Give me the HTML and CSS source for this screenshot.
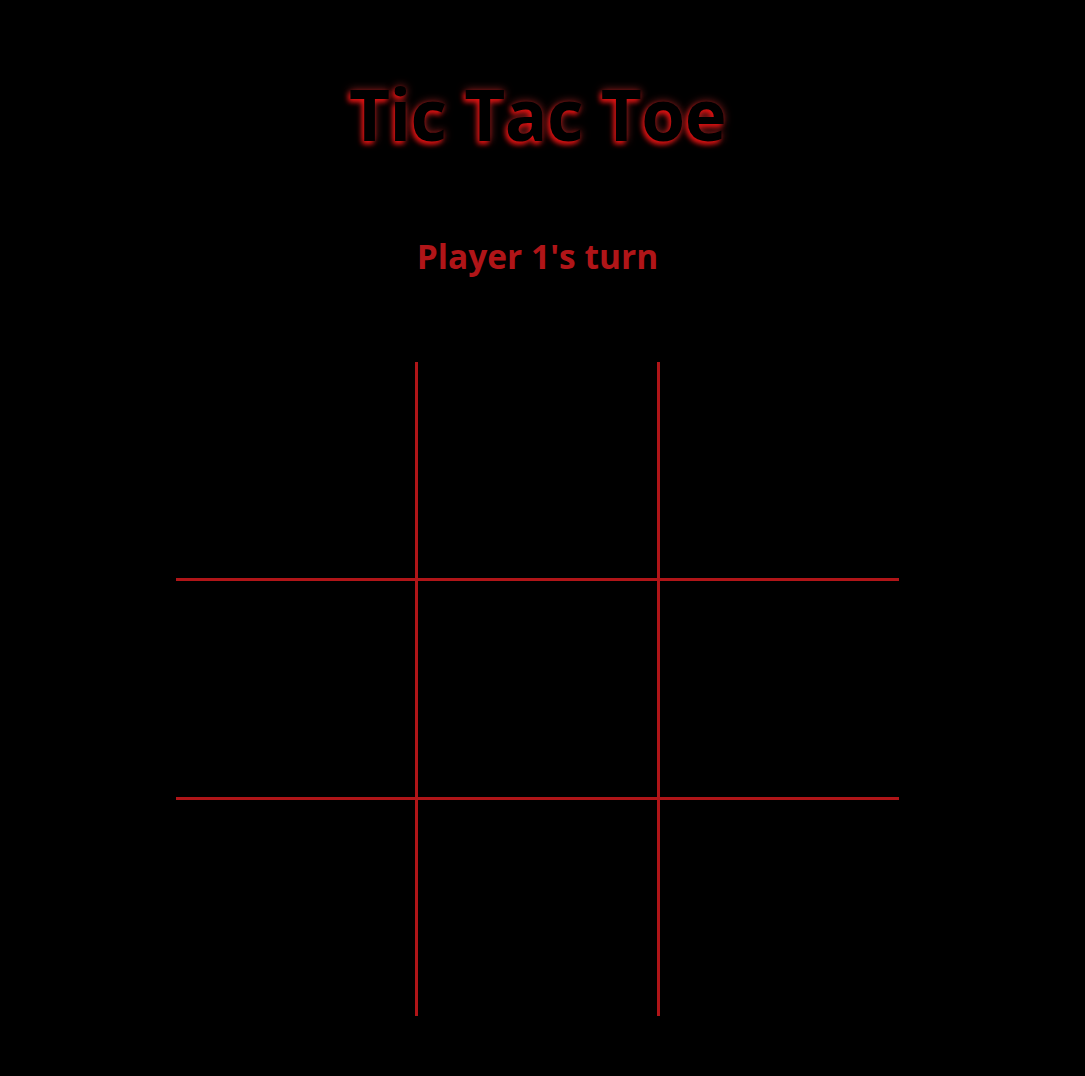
FILE: index.html
```html
<!DOCTYPE html>
<html lang="en">
<head>
<meta charset="utf-8">
<title>Tic Tac Toe</title>
<link rel="stylesheet" href="styles.css">
</head>
<body>
<main class="page">
  <h1 class="title">Tic Tac Toe</h1>
  <p class="status">Player 1's turn</p>
  <div class="board">
    <div class="cell"></div><div class="cell"></div><div class="cell"></div>
    <div class="cell"></div><div class="cell"></div><div class="cell"></div>
    <div class="cell"></div><div class="cell"></div><div class="cell"></div>
  </div>
</main>
</body>
</html>
```
FILE: styles.css
```css
html, body {
  margin: 0;
  padding: 0;
  background: #000;
}
body {
  font-family: "Open Sans", "Noto Sans", sans-serif;
  height: 1076px;
  overflow: hidden;
}
.page {
  display: flex;
  flex-direction: column;
  align-items: center;
  padding-right: 10px;
}
.title {
  margin: 66px 0 0;
  font-size: 71px;
  line-height: 96px;
  font-weight: 700;
  color: #000;
  letter-spacing: -0.6px;
  text-shadow: -2px 3px 5px #e01010, 0 0 9px rgba(210, 50, 50, 0.7);
}
.status {
  margin: 72px 0 0;
  font-size: 33.5px;
  line-height: 44px;
  font-weight: 700;
  color: #b01518;
}
.board {
  margin-top: 84px;
  display: grid;
  grid-template-columns: repeat(3, 239px);
  grid-template-rows: repeat(3, 216px);
  gap: 3px;
  background: #b01518;
}
.cell {
  background: #000;
}
```
